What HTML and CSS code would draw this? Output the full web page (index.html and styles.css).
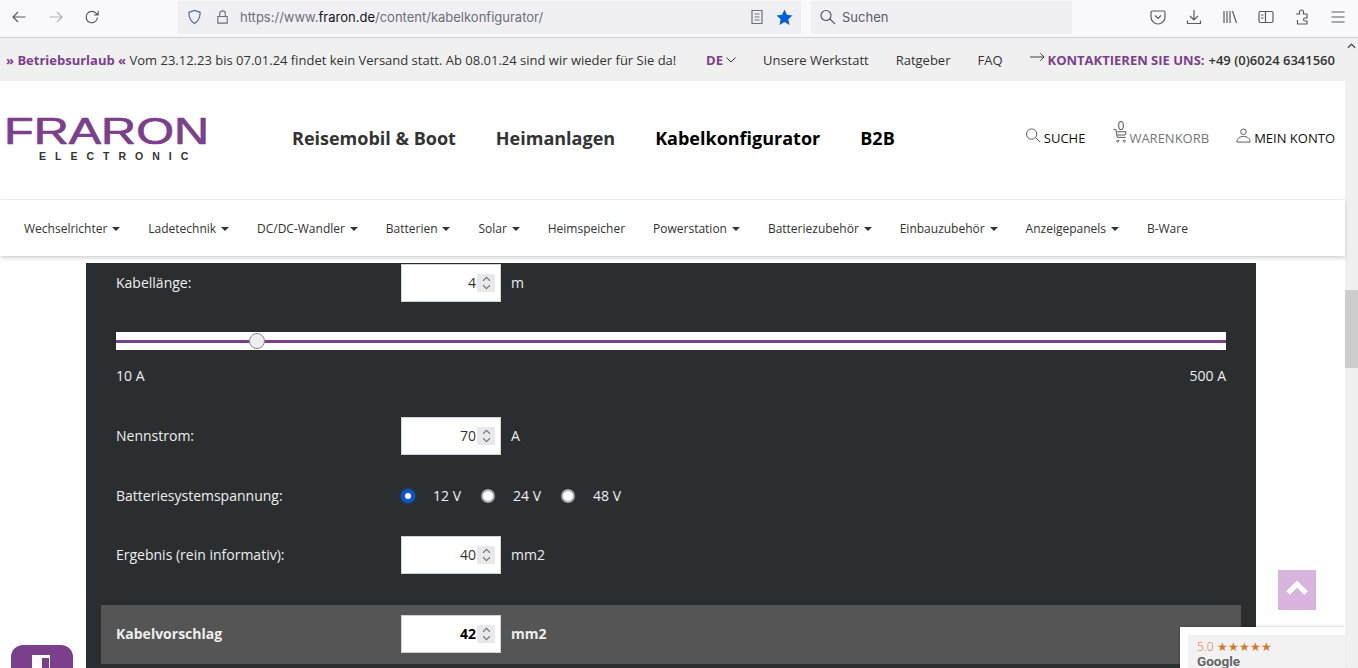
FILE: index.html
```html
<!DOCTYPE html>
<html lang="de">
<head>
    <meta charset="UTF-8">
    <meta name="viewport" content="width=device-width, initial-scale=1.0">
    <title>Kabelkonfigurator</title>
    <link rel="stylesheet" href="styles.css">
</head>
<body>

<!-- Browser toolbar -->
<div class="browser-bar">
    <div class="nav-btns">
        <svg class="tb-icon" viewBox="0 0 16 16"><path d="M14.5 8H2M7 3 2 8l5 5"/></svg>
        <svg class="tb-icon dim" viewBox="0 0 16 16"><path d="M1.5 8H14M9 3l5 5-5 5"/></svg>
        <svg class="tb-icon" viewBox="0 0 16 16"><path d="M13.5 8.5A5.7 5.7 0 1 1 12 4.2L14 6M14.2 1.8V6H10"/></svg>
    </div>
    <div class="url-bar">
        <svg class="shield" viewBox="0 0 16 16"><path d="M8 1 14 3c0 6-1.500 9.500-6 12C3.500 12.500 2 9 2 3z"/></svg>
        <svg class="lock" viewBox="0 0 16 16"><path d="M3 7.500h10V14.500H3zM5 7.500V4.500a3 3 0 0 1 6 0v3"/></svg>
        <span class="url">https://www.<b>fraron.de</b>/content/kabelkonfigurator/</span>
        <svg class="tb-icon reader" viewBox="0 0 16 16"><path d="M3 1.500h10v13H3zM5.500 5h5M5.500 8h5M5.500 11h5"/></svg>
        <svg class="star" viewBox="0 0 16 16"><path d="M8 .5l2.300 5 5.200.6-3.900 3.600 1.100 5.300L8 12.300 3.300 15l1.100-5.300L.5 6.100l5.200-.6z"/></svg>
    </div>
    <div class="search-bar">
        <svg class="tb-icon" viewBox="0 0 16 16"><path d="M10 10l5 5M11 6.500a5 5 0 1 1-10 0 5 5 0 0 1 10 0z"/></svg>
        <span>Suchen</span>
    </div>
    <div class="tb-right">
        <svg class="tb-icon" viewBox="0 0 16 16"><path d="M2.500 2h11A1.500 1.500 0 0 1 15 3.500V8A7 7 0 0 1 1 8V3.500A1.500 1.500 0 0 1 2.500 2zM5 6.500l3 3 3-3"/></svg>
        <svg class="tb-icon" viewBox="0 0 16 16"><path d="M8 1v10M4 7l4 4 4-4M1.500 11.500v3h13v-3"/></svg>
        <svg class="tb-icon" viewBox="0 0 16 16"><path d="M2 2v12M5 2v12M8 2v12M10.500 2l4 12"/></svg>
        <svg class="tb-icon" viewBox="0 0 16 16"><path d="M2.500 2.500h11a1.500 1.500 0 0 1 1.500 1.500v8a1.500 1.500 0 0 1-1.500 1.500h-11A1.500 1.500 0 0 1 1 12V4a1.500 1.500 0 0 1 1.500-1.500zM7.500 2.500v11M3 6h2.500M3 9h2.500"/></svg>
        <svg class="tb-icon" viewBox="0 0 16 16"><path d="M2 5h3.500V3a2 2 0 0 1 4 0v2H13v4h-2a1.500 1.500 0 0 0 0 3h2v3H3.500V11"/></svg>
        <svg class="tb-icon" viewBox="0 0 16 16"><path d="M1.500 3h13M1.500 8h13M1.500 13h13"/></svg>
    </div>
</div>

<div class="window">
    <div class="page">

        <!-- Top info bar -->
        <div class="info-bar">
            <div class="notice"><b>» Betriebsurlaub «</b> Vom 23.12.23 bis 07.01.24 findet kein Versand statt. Ab 08.01.24 sind wir wieder für Sie da!</div>
            <div class="info-links">
                <span class="lang"><b>DE</b><svg viewBox="0 0 10 6"><path d="M.5.500 5 5 9.500.500"/></svg></span>
                <a href="#">Unsere Werkstatt</a>
                <a href="#">Ratgeber</a>
                <a href="#">FAQ</a>
                <span class="contact"><svg viewBox="0 0 16 10"><path d="M0 5h15M11 1l4 4-4 4"/></svg><b>KONTAKTIEREN SIE UNS:</b> <strong>+49 (0)6024 6341560</strong></span>
            </div>
        </div>

        <!-- Logo, main menu, shop links -->
        <header class="header">
            <div class="logo">
                <svg viewBox="0 0 202 30" class="logo-mark"><text x="-2" y="27" textLength="205" lengthAdjust="spacingAndGlyphs">FRARON</text></svg>
                <div class="logo-sub">ELECTRONIC</div>
            </div>
            <nav class="main-nav">
                <a href="#">Reisemobil &amp; Boot</a>
                <a href="#">Heimanlagen</a>
                <a href="#" class="active">Kabelkonfigurator</a>
                <a href="#" class="active">B2B</a>
            </nav>
            <div class="shop-links">
                <a href="#"><svg viewBox="0 0 16 16"><path d="M10.500 10.500 15 15M11.500 6.500a5.500 5.500 0 1 1-11 0 5.500 5.500 0 0 1 11 0z"/></svg><span>SUCHE</span></a>
                <a href="#" class="cart">
                    <span class="cart-count">0</span>
                    <svg viewBox="0 0 16 16"><path d="M.5 1.500h2.500l1.500 8.500h9M3.500 4h10.500l-1 3.500H4M5 13a1 1 0 1 0 .1 0M12 13a1 1 0 1 0 .1 0"/></svg><span class="muted">WARENKORB</span>
                </a>
                <a href="#"><svg viewBox="0 0 16 16"><path d="M11 4a3 3 0 1 1-6 0 3 3 0 0 1 6 0zM1 15c0-4 3-6 7-6s7 2 7 6z"/></svg><span>MEIN KONTO</span></a>
            </div>
        </header>

        <!-- Category menu -->
        <nav class="cat-nav">
            <a href="#" class="drop">Wechselrichter</a>
            <a href="#" class="drop">Ladetechnik</a>
            <a href="#" class="drop">DC/DC-Wandler</a>
            <a href="#" class="drop">Batterien</a>
            <a href="#" class="drop">Solar</a>
            <a href="#">Heimspeicher</a>
            <a href="#" class="drop">Powerstation</a>
            <a href="#" class="drop">Batteriezubehör</a>
            <a href="#" class="drop">Einbauzubehör</a>
            <a href="#" class="drop">Anzeigepanels</a>
            <a href="#">B-Ware</a>
        </nav>

        <!-- Configurator -->
        <main class="content">
            <section class="panel">
                <div class="row row-first">
                    <label class="row-label">Kabellänge:</label>
                    <span class="num"><span>4</span><i class="spin"><svg viewBox="0 0 8 14"><path d="M1 5l3-3 3 3M1 9l3 3 3-3"/></svg></i></span>
                    <span class="unit">m</span>
                </div>

                <input class="slider" type="range" min="10" max="500" value="70">
                <div class="slider-scale"><span>10 A</span><span>500 A</span></div>

                <div class="row">
                    <label class="row-label">Nennstrom:</label>
                    <span class="num"><span>70</span><i class="spin"><svg viewBox="0 0 8 14"><path d="M1 5l3-3 3 3M1 9l3 3 3-3"/></svg></i></span>
                    <span class="unit">A</span>
                </div>

                <div class="row row-radio">
                    <label class="row-label">Batteriesystemspannung:</label>
                    <div class="radios">
                        <label><input type="radio" name="volt" checked> 12 V</label>
                        <label><input type="radio" name="volt"> 24 V</label>
                        <label><input type="radio" name="volt"> 48 V</label>
                    </div>
                </div>

                <div class="row row-result">
                    <label class="row-label">Ergebnis (rein informativ):</label>
                    <span class="num"><span>40</span><i class="spin"><svg viewBox="0 0 8 14"><path d="M1 5l3-3 3 3M1 9l3 3 3-3"/></svg></i></span>
                    <span class="unit">mm2</span>
                </div>

                <div class="row row-proposal">
                    <label class="row-label">Kabelvorschlag</label>
                    <span class="num"><span>42</span><i class="spin"><svg viewBox="0 0 8 14"><path d="M1 5l3-3 3 3M1 9l3 3 3-3"/></svg></i></span>
                    <span class="unit">mm2</span>
                </div>
            </section>
        </main>
    </div>

    <!-- Page scrollbar -->
    <div class="scrollbar">
        <svg class="scroll-up" viewBox="0 0 10 6"><path d="M1 5l4-4 4 4"/></svg>
        <div class="scroll-thumb"></div>
    </div>
</div>

<!-- Floating things -->
<a href="#" class="to-top"><svg viewBox="0 0 24 16"><path d="M3 13 12 4l9 9"/></svg></a>
<div class="chat-tab"><span class="chat-glyph"></span></div>
<div class="google-badge">
    <div class="google-inner">
        <div class="rating">5.0 <span>★★★★★</span></div>
        <div class="google-name">Google</div>
    </div>
</div>

</body>
</html>
```
FILE: styles.css
```css
/* General Reset */
* {
    margin: 0;
    padding: 0;
    box-sizing: border-box;
}

html, body {
    height: 668px;
    overflow: hidden;
}

body {
    position: relative;
    font-family: 'Open Sans', sans-serif;
    font-size: 14px;
    color: #333;
    background: #fff;
}

a {
    color: inherit;
    text-decoration: none;
}

svg {
    display: block;
    fill: none;
    stroke: currentColor;
}

/* Browser toolbar */
.browser-bar {
    display: flex;
    align-items: center;
    height: 38px;
    padding-bottom: 3px;
    background: #f9f9fb;
    border-bottom: 1px solid #cfcfd8;
    color: #5b5b66;
    font-family: 'Inter', sans-serif;
}

.tb-icon {
    width: 16px;
    height: 16px;
    stroke-width: 1.2;
    flex: none;
}

.tb-icon.dim {
    color: #b4b4bb;
}

.nav-btns {
    display: flex;
    gap: 20.500px;
    width: 178px;
    padding-left: 11px;
}

.url-bar {
    display: flex;
    align-items: center;
    width: 623px;
    height: 33px;
    padding: 0 8px 0 9px;
    background: #f0f0f4;
    font-size: 13px;
    color: #6e6e78;
}

.shield {
    width: 15px;
    height: 16px;
    color: #5a6aa0;
    stroke-width: 1.3;
}

.lock {
    width: 15px;
    height: 16px;
    margin-left: 13px;
    stroke-width: 1.2;
}

.url {
    margin-left: 10px;
    flex: 1;
}

.url b {
    font-weight: 400;
    color: #15141a;
}

.reader {
    margin-right: 11px;
}

.star {
    width: 17px;
    height: 17px;
    fill: #0060df;
    stroke: none;
}

.search-bar {
    display: flex;
    align-items: center;
    gap: 6px;
    width: 261px;
    height: 33px;
    margin-left: 10px;
    padding-left: 9px;
    background: #f0f0f4;
    font-size: 13px;
    color: #5b5b66;
}

.tb-right {
    display: flex;
    gap: 20px;
    margin-left: 78px;
}

/* Page window with scrollbar */
.window {
    display: flex;
    height: 630px;
}

.page {
    width: 1345px;
    flex: none;
}

.scrollbar {
    flex: 1;
    background: #f0f0f0;
    padding-top: 5px;
}

.scroll-up {
    width: 9px;
    height: 6px;
    margin: 0 auto;
    color: #505050;
    stroke-width: 1.5;
}

.scroll-thumb {
    height: 78px;
    margin-top: 241px;
    background: #cdcdcd;
}

/* Top info bar */
.info-bar {
    display: flex;
    justify-content: space-between;
    align-items: center;
    height: 43px;
    padding: 0 10px 0 6px;
    background: #f0f0f0;
    font-size: 13px;
    color: #333;
    white-space: nowrap;
}

.notice b {
    color: #7b3f8c;
}

.info-links {
    display: flex;
    align-items: center;
    gap: 27px;
}

.lang {
    display: flex;
    align-items: center;
    gap: 3px;
}

.lang b {
    color: #7b3f8c;
}

.lang svg {
    width: 10px;
    height: 6px;
}

.contact {
    display: flex;
    align-items: center;
    gap: 3px;
}

.contact svg {
    width: 15px;
    height: 10px;
    margin-top: -5px;
}

.contact b {
    color: #7b3f8c;
    margin-right: 1px;
}

.contact strong {
    color: #333;
    font-weight: 600;
}

/* Header */
.header {
    display: flex;
    align-items: center;
    height: 119px;
    padding: 0 10px 4px 6px;
    background: #fff;
    border-bottom: 1px solid #f0f0f0;
}

.logo {
    width: 286px;
    flex: none;
    margin-top: 2px;
}

.logo-mark {
    width: 202px;
    height: 30px;
    overflow: visible;
    fill: #7b3f8c;
    stroke: #7b3f8c;
    stroke-width: 0.7;
    stroke-linejoin: round;
}

.logo-mark text {
    font-family: 'Liberation Sans', sans-serif;
    font-size: 36px;
}

.logo-sub {
    margin: 3px 0 0 33px;
    font-family: 'Liberation Sans', sans-serif;
    font-size: 10.500px;
    font-weight: 700;
    letter-spacing: 9px;
    line-height: 12px;
    color: #333;
}

.main-nav {
    display: flex;
    gap: 40px;
    font-size: 18px;
    font-weight: 700;
    color: #333;
    white-space: nowrap;
}

.main-nav .active {
    color: #000;
}

.shop-links {
    display: flex;
    align-items: flex-end;
    gap: 27px;
    margin-left: auto;
    margin-bottom: 2px;
    font-size: 13px;
    color: #111;
    white-space: nowrap;
}

.shop-links a {
    position: relative;
    display: flex;
    align-items: flex-end;
    gap: 3px;
}

.shop-links .cart {
    gap: 1px;
    margin-left: 1px;
}

.shop-links svg {
    width: 15px;
    height: 15px;
    margin-bottom: 4px;
    color: #555;
    stroke-width: 1;
}

.shop-links .muted {
    color: #777;
}

.cart-count {
    position: absolute;
    left: 4px;
    top: -9px;
    font-size: 12px;
    line-height: 14px;
    color: #555;
}

/* Category menu */
.cat-nav {
    display: flex;
    align-items: center;
    gap: 28px;
    height: 56px;
    padding-left: 24px;
    background: #fff;
    box-shadow: 0 2px 4px rgba(0, 0, 0, 0.18);
    position: relative;
    font-size: 12px;
    color: #333;
    white-space: nowrap;
}

.drop::after {
    content: "";
    display: inline-block;
    margin-left: 4.900px;
    border-top: 4px solid #333;
    border-left: 4px solid transparent;
    border-right: 4px solid transparent;
    vertical-align: 2px;
}

/* Configurator panel */
.content {
    padding: 7px 89px 0 86px;
}

.panel {
    height: 500px;
    padding: 1px 30px 0;
    background: #2b2e31;
    color: #eee;
}

.row {
    display: flex;
    align-items: center;
    min-height: 38px;
    margin-bottom: 21px;
}

.row-first {
    margin-bottom: 30px;
}

.row-radio {
    min-height: 39px;
}

.row-result {
    margin-bottom: 31px;
}

.row-label {
    width: 285px;
    flex: none;
    padding-bottom: 2px;
}

.row-radio .row-label {
    padding-bottom: 0;
}

.row-proposal {
    margin: 0 -15px;
    padding: 10px 15px 11px;
    background: #555;
    font-weight: 700;
}

.row-proposal .num {
    font-weight: 700;
    color: #000;
}

.num {
    display: flex;
    align-items: center;
    justify-content: flex-end;
    gap: 1px;
    width: 100px;
    height: 38px;
    padding-right: 5px;
    background: #fff;
    border: 1px solid #ced4da;
    color: #333;
}

.num > span {
    padding-bottom: 2px;
}

.spin {
    width: 18px;
    height: 18px;
    background: #e9e9ed;
    color: #777;
}

.spin svg {
    width: 9px;
    height: 16px;
    margin: 1px auto 0;
    stroke-width: 1;
}

.unit {
    margin-left: 10px;
    padding-bottom: 2px;
}

.slider {
    display: block;
    appearance: none;
    -webkit-appearance: none;
    width: 100%;
    height: 18px;
    background: linear-gradient(#fff 8px, #7b3f8c 8px, #7b3f8c 11px, #fff 11px);
    outline: none;
}

.slider::-webkit-slider-thumb {
    -webkit-appearance: none;
    width: 16px;
    height: 16px;
    border-radius: 50%;
    background: #efefef;
    border: 1px solid #888;
    transform: translateX(-1px);
}

.slider-scale {
    display: flex;
    justify-content: space-between;
    height: 19px;
    margin: 16px 0 32px;
    line-height: 19px;
}

.radios {
    display: flex;
}

.radios label {
    display: flex;
    align-items: center;
    gap: 18px;
    margin-right: 20px;
}

.radios input {
    appearance: none;
    -webkit-appearance: none;
    width: 14px;
    height: 14px;
    border-radius: 50%;
    border: 2px solid #a8a8a8;
    background: #fff;
}

.radios input:checked {
    border: 4px solid #0b57c0;
    background: #fff;
    box-shadow: 0 0 0 1px #1c3f70;
}

/* Floating things */
.to-top {
    position: absolute;
    left: 1278px;
    top: 570px;
    width: 38px;
    height: 40px;
    padding: 10px 7px;
    background: #d8b4df;
    color: #fff;
}

.to-top svg {
    width: 24px;
    height: 16px;
    stroke-width: 5;
}

.chat-tab {
    position: absolute;
    left: 11px;
    top: 645px;
    width: 62px;
    height: 23px;
    padding: 10px 0 0 21px;
    border-radius: 12px 12px 0 0;
    background: #7b3f8c;
}

.chat-glyph {
    display: block;
    width: 18px;
    height: 13px;
    border-style: solid;
    border-color: #fff;
    border-width: 3px 1px 0 10px;
}

.google-badge {
    position: absolute;
    left: 1180px;
    top: 627px;
    width: 165px;
    height: 41px;
    padding: 8px 0 0 8px;
    background: #fff;
    box-shadow: -1px -1px 2px rgba(0, 0, 0, 0.15);
}

.google-inner {
    height: 33px;
    padding: 5px 0 0 9px;
    background: #f2f2f2;
}

.rating {
    font-size: 12px;
    line-height: 14px;
    font-weight: 300;
    color: #d9752a;
}

.rating span {
    font-family: 'DejaVu Sans', sans-serif;
    font-size: 11.500px;
    line-height: 12px;
}

.google-name {
    font-family: 'Roboto', sans-serif;
    font-size: 13.500px;
    font-weight: 700;
    line-height: 14px;
    color: #666;
}
```
